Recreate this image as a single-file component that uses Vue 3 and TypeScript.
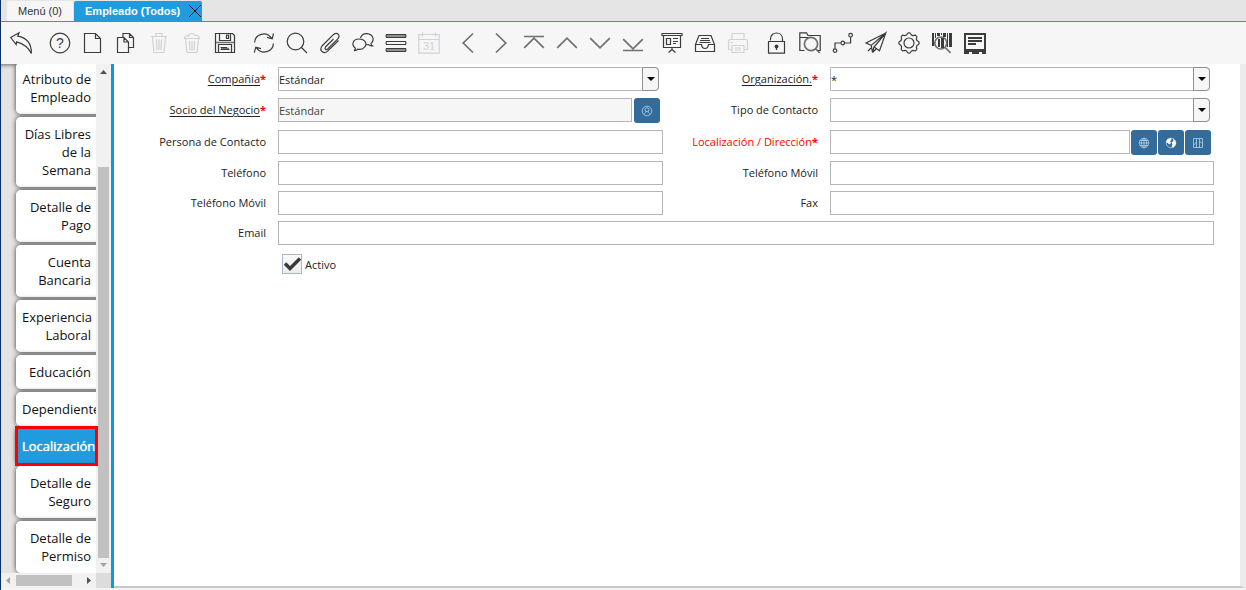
<script setup lang="ts">
import { ref } from 'vue'

interface Icon {
  name: string
  d?: string
  fill?: string
  soft?: string
  text?: string
  textY?: number
  size?: number
  disabled?: boolean
}

const ring = (x: number, y: number, r: number): string =>
  `M${x - r} ${y}a${r} ${r} 0 1 0 ${2 * r} 0a${r} ${r} 0 1 0 ${-2 * r} 0`

const gear = (): string => {
  const steps = 64
  const points: string[] = []
  for (let i = 0; i < steps; i++) {
    const a = (i / steps) * Math.PI * 2
    const r = 9.2 + 0.9 * Math.tanh(2.5 * Math.cos(8 * a))
    points.push(`${(11 + r * Math.cos(a)).toFixed(2)} ${(11 + r * Math.sin(a)).toFixed(2)}`)
  }
  return `M${points.join('L')}Z`
}

const groups: Icon[][] = [
  [{ name: 'Deshacer', d: 'M.7 5.5L9 .8L7.8 4.2C15.5 5.5 21.5 10.5 21.4 21.5C18 14.5 13.5 11.6 6.6 9.8L6.2 12.6Z' }],
  [
    { name: 'Ayuda', d: ring(11, 11, 9.8), text: '?', textY: 16, size: 14 },
    { name: 'Nuevo', d: 'M2.5 1.5H13.5L18.5 6.5V20.5H2.5ZM13.5 1.5V6.5H18.5' },
    { name: 'Copiar', d: 'M2.5 5.5H9L13.5 10V20.5H2.5ZM9 5.5V10H13.5M8 5V1.5H14.5L18.5 5.5V15.5H14M14.5 1.5V5.5H18.5' },
    { name: 'Borrar', disabled: true, d: 'M3 4.5H19M8 4V1.5H14V4M4.5 5L6 20.5H16L17.5 5M8.5 7.5L9 18M11 7.5V18M13.5 7.5L13 18' },
    { name: 'Borrar selección', disabled: true, d: 'M3.5 6.5C4 3 6.5 3.5 7.5 4C8 1 13 .5 14 3.5C16 2.5 18 4 18.5 6.5ZM4.5 7L6 20.5H16L17.5 7M8.5 9L9 18.5M11 9V18.5M13.5 9L13 18.5' },
    { name: 'Guardar', d: 'M1.5 1.5H18.5L20.5 3.5V20.5H1.5ZM5.5 1.5V8.5H16.5V1.5M12.5 3V6.5H14.5V3ZM4.5 20V12.5H17.5V20M6.5 15.5H13M6.5 17.5H15.5', soft: 'M2 10.5H20M7 16.5H15' },
  ],
  [
    { name: 'Refrescar', d: 'M1.6 10.5C2 2.2 13-1.6 18.8 6.4M20.5 1.5L19.2 6.8L14 5.4M20.4 11.5C20 19.8 9 23.6 3.2 15.6M1.3 20.6L2.8 15.2L8 16.6' },
    { name: 'Buscar', d: ring(9.5, 9.5, 8.3) + 'M15.5 15.5L21 21' },
    { name: 'Adjuntos', d: 'M14.5 7L6.500 15C5 17 7 18.500 8.700 17L18.800 6.900C21.800 3 18.200 -.3 14.600 2.400L3 14C-.3 18.400 4.600 22.400 8.400 19.400L19.500 8.500' },
    { name: 'Chat', d: 'M2 18.6C3.2 18 3.5 17.2 3.4 16.2C-1 12.8.8 7 6.8 7C13.2 7 15.7 12 12.4 15.4C10 17.6 7.4 17.6 5.8 17.2C4.6 18.5 3.2 18.8 2 18.6M8.4 6C9.6 2.6 12.2 1.4 15 1.6C21 2 23 8 19 11.4C19 12.6 19.6 13.4 20.4 13.8C18.6 14.2 17.4 13.6 16.4 12.6C15.4 12.8 14.8 12.8 14.2 12.6' },
    { name: 'Registros', d: 'M1.5 2.5H20.5Q21.5 4 20.5 5.5H1.5Q.5 4 1.5 2.5ZM1.5 9.5H20.5Q21.5 11 20.5 12.5H1.5Q.5 11 1.5 9.5ZM1.5 16.5H20.5Q21.5 18 20.5 19.5H1.5Q.5 18 1.5 16.5Z', soft: 'M1.5 4H20.5M1.5 18H20.5' },
    { name: 'Calendario', disabled: true, d: 'M.8 2.5H21.2V21.2H.8ZM.8 7.5H21.2M4.5 .5V4.5M17.5 .5V4.5', text: '31', textY: 18, size: 11 },
  ],
  [
    { name: 'Anterior', soft: 'M16 1.5L6.2 11L16 20.5' },
    { name: 'Siguiente', soft: 'M6 1.5L15.8 11L6 20.5' },
    { name: 'Primer registro', soft: 'M1 4.5H21M1.2 15.8L11 6.2L20.8 15.8' },
    { name: 'Registro anterior', soft: 'M1.2 15.8L11 6.2L20.8 15.8' },
    { name: 'Registro siguiente', soft: 'M1.2 6.2L11 15.8L20.8 6.2' },
    { name: 'Último registro', soft: 'M1.2 7.2L11 16.8L20.8 7.2M1 18.5H21' },
  ],
  [
    { name: 'Informe', d: 'M1 1.5H21V3.5H1ZM2.5 4V15.5H19.5V4M5.5 6.5H9.5V12.5H5.5ZM12 6.5H17M12 9.5H17M12 11.5H15M11 16V18M11 17.5L7.5 20.5M11 17.5L14.5 20.5' },
    { name: 'Archivo', d: 'M1.5 12.5L5 3.5H17L20.5 12.5V19.5H1.5ZM1.5 12.5H7.5Q8 16.5 11 16.5Q14 16.5 14.5 12.5H20.5M7 6.5H15M6 8.5H16M5.5 10.5H16.5' },
    { name: 'Imprimir', disabled: true, d: 'M5 7V1.5H17V7M4 17.5H1.5V9Q1.5 7.5 3 7.5H19Q20.5 7.5 20.5 9V17.5H18M5 13.5H17V20.5H5ZM3.5 10.5H6M8 16H14M8 18H14' },
  ],
  [
    { name: 'Bloquear', d: 'M2.500 9.5H18.5V21.2H2.500ZM4.5 8.5V7C4.5-1 16.500-1 16.500 7V9.5M10.5 15V18', fill: ring(10.5, 14.5, 1.9) },
    { name: 'Acercar', d: 'M5.5 18.5H.8V.8H7.5L9 3.5H21.2V18.5H19M.8 5.5H9', soft: ring(12, 12, 6.6) + 'M16.8 16.8L20.8 21' },
    { name: 'Flujo de trabajo', d: ring(3, 18.6, 1.8) + ring(10.8, 11, 1.8) + ring(18.6, 3.2, 1.8) + 'M3 16.5V11H8.8M12.8 11H18.6V5.2' },
    { name: 'Solicitudes', d: 'M20.8 1L1 11L6.2 13.4L20.8 1L14.5 18.8L9 15L20.8 1M6.2 13.4L7.5 20.5L9 15M11 17L7.5 20.5M3 19L6 16' },
    { name: 'Proceso', d: gear() + ring(11, 11, 5) },
    { name: 'Buscar producto', fill: 'M1 1H3V14H1ZM4 1H5V6H4ZM6 1H9V4H6ZM10 1H11V3H10ZM12 1H15V5H12ZM16 1H17V15H16ZM18 1H21V15H18ZM7 7H9V15H7ZM10 6H13V16H10Z', soft: ring(9.8, 11, 6) + 'M14.2 15.5L19.5 20.8' },
    { name: 'Formulario', fill: 'M0 1H22V22H18V20H15V22H8V20H5V22H0ZM2 3V17H20V3Z M4 5H18V7H4ZM4 8H18V10H4ZM4 11H12V13H4Z', d: '' },
  ],
]

const sideTabs = [
  'Atributo de Empleado', 'Días Libres de la Semana', 'Detalle de Pago', 'Cuenta Bancaria',
  'Experiencia Laboral', 'Educación', 'Dependientes', 'Localización', 'Detalle de Seguro', 'Detalle de Permiso',
]
const current = 'Localización'

const company = ref('Estándar')
const organization = ref('*')
const contactType = ref('')
const partner = ref('Estándar')
const active = ref(true)
</script>

<template>
  <div class="window">
    <nav class="window-tabs">
      <button type="button" class="wtab">Menú (0)</button>
      <button type="button" class="wtab selected">
        Empleado (Todos)
        <svg class="close" viewBox="0 0 14 14"><path d="M1 1L13 13M13 1L1 13" /></svg>
      </button>
    </nav>

    <div class="toolbar" role="toolbar">
      <div v-for="(group, g) in groups" :key="g" class="group">
        <button v-for="icon in group" :key="icon.name" type="button" class="tool" :disabled="icon.disabled" :aria-label="icon.name">
          <svg viewBox="0 0 22 22">
            <path v-if="icon.soft" class="soft" :d="icon.soft" />
            <path v-if="icon.d" class="line" :d="icon.d" />
            <path v-if="icon.fill" class="solid" fill-rule="evenodd" :d="icon.fill" />
            <text v-if="icon.text" x="11" :y="icon.textY" :font-size="icon.size">{{ icon.text }}</text>
          </svg>
        </button>
      </div>
    </div>

    <div class="body">
      <aside class="side">
        <div class="side-view">
          <nav class="side-tabs">
            <div v-for="tab in sideTabs" :key="tab" class="slot" :class="{ marked: tab === current }">
              <button type="button" class="stab" :class="{ current: tab === current }">{{ tab }}</button>
            </div>
          </nav>
          <div class="vbar">
            <svg class="arrow" viewBox="0 0 15 15"><path d="M4 10L7.500 6L11 10Z" fill="#505050" /></svg>
            <div class="vthumb"></div>
            <svg class="arrow" viewBox="0 0 15 15"><path d="M4 5L7.500 9L11 5Z" fill="#a3a3a3" /></svg>
          </div>
        </div>
        <div class="hrow">
          <div class="hbar">
            <svg class="arrow" viewBox="0 0 15 15"><path d="M9 4L5 7.500L9 11Z" fill="#a3a3a3" /></svg>
            <div class="hthumb"></div>
            <svg class="arrow" viewBox="0 0 15 15"><path d="M6 4L10 7.500L6 11Z" fill="#505050" /></svg>
          </div>
          <div class="corner"></div>
        </div>
      </aside>

      <main class="content">
        <form class="form" @submit.prevent>
          <label for="company"><span class="link">Compañía</span><b>*</b></label>
          <div class="combo">
            <select id="company" v-model="company"><option>Estándar</option></select>
            <span class="drop"></span>
          </div>
          <label for="org"><span class="link">Organización.</span><b>*</b></label>
          <div class="combo">
            <select id="org" v-model="organization"><option>*</option></select>
            <span class="drop"></span>
          </div>

          <label for="partner"><span class="link">Socio del Negocio</span><b>*</b></label>
          <div class="lookup">
            <input id="partner" v-model="partner" type="text" disabled />
            <button type="button" aria-label="Socio del Negocio">
              <svg viewBox="0 0 12 12"><path :d="ring(6, 6, 4.8)" /><path :d="ring(6, 4.8, 2)" /><path d="M3 9.500C3.500 7.500 5 7.500 5 6.500M9 9.500C8.500 7.500 7 7.500 7 6.500" /></svg>
            </button>
          </div>
          <label for="ctype">Tipo de Contacto</label>
          <div class="combo">
            <select id="ctype" v-model="contactType"><option value=""></option></select>
            <span class="drop"></span>
          </div>

          <label for="person">Persona de Contacto</label>
          <input id="person" type="text" />
          <label for="location" class="missing">Localización / Dirección<b>*</b></label>
          <div class="lookup wide">
            <input id="location" type="text" />
            <button type="button" aria-label="Dirección">
              <svg viewBox="0 0 12 12"><path :d="ring(6, 6, 4.8)" /><path d="M6 1V11M1 6H11M2 3.500H10M2 8.500H10M6 1C2.500 4 2.500 8 6 11C9.500 8 9.500 4 6 1" /></svg>
            </button>
            <button type="button" aria-label="Mapa">
              <svg viewBox="0 0 12 12"><path :d="ring(6, 6, 4.8)" /><path class="land" d="M1 5L2.500 2L6 1L6.500 3L5 4L6 6L4.500 7.500L2.500 6ZM8 1.500L10.500 4L11 7L8.500 10.500L6.500 9.500L7.500 7.500L6.500 5.500L8.500 4Z" /></svg>
            </button>
            <button type="button" aria-label="Ruta">
              <svg viewBox="0 0 12 12"><path d="M1.500 1.500L4.500 1.500L7.500 1.500L10.500 1.500V10.500H1.500ZM4.500 1.500V10.500M7.500 1.500V10.500M2 8L4.500 5M7.500 4L10 6.500" /></svg>
            </button>
          </div>

          <label for="phone">Teléfono</label>
          <input id="phone" type="text" />
          <label for="mobile2">Teléfono Móvil</label>
          <input id="mobile2" type="text" />

          <label for="mobile">Teléfono Móvil</label>
          <input id="mobile" type="text" />
          <label for="fax">Fax</label>
          <input id="fax" type="text" />

          <label for="email">Email</label>
          <input id="email" type="text" class="full" />

          <div class="check">
            <span class="box">
              <input id="active" v-model="active" type="checkbox" />
              <svg v-if="active" viewBox="0 0 20 20"><path d="M3 9.500L8 14.500L18 4.500" /></svg>
            </span>
            <label for="active">Activo</label>
          </div>
        </form>
      </main>
    </div>
  </div>
</template>

<style>
html,
body,
#app {
  height: 100%;
}
</style>

<style scoped>
* {
  box-sizing: border-box;
}
button {
  margin: 0;
  padding: 0;
  border: 0;
  background: none;
}
.window {
  display: flex;
  flex-direction: column;
  min-height: 100%;
  padding-bottom: 2px;
  border-left: 1px solid #0a3361;
  background: #f4f4f4;
  font-family: "Open Sans", "Noto Sans", sans-serif;
  font-size: 11px;
  color: #222;
}
.window-tabs {
  display: flex;
  gap: 1px;
  height: 22px;
  padding: 1px 0 0 6px;
  border-bottom: 1px solid #1f9bde;
  background: #e5e5e5;
}
.wtab {
  padding: 0 11px;
  background: #f6f6f6;
  color: #333;
  font: 11px/20px "Liberation Sans", Arial, sans-serif;
}
.wtab.selected {
  display: flex;
  align-items: center;
  gap: 8px;
  padding-right: 0;
  border-radius: 2px 2px 0 0;
  background: #1f9bde;
  color: #fff;
  font-weight: bold;
}
.close {
  width: 14px;
  height: 14px;
  fill: none;
  stroke: #111;
}
.toolbar {
  display: flex;
  gap: 6px;
  height: 42px;
  padding-left: 3px;
  background: #f6f6f6;
}
.group {
  display: flex;
}
.tool {
  width: 33px;
  padding: 0 5px 0 6px;
  color: #3c3c3c;
}
.tool:disabled {
  color: #d2d2d2;
}
.tool svg {
  display: block;
  width: 22px;
  height: 22px;
  overflow: visible;
}
.line,
.soft {
  fill: none;
  stroke: currentColor;
  stroke-width: 1.2;
}
.soft {
  stroke: #707070;
  stroke-width: 1.7;
}
.solid,
.tool text {
  fill: currentColor;
}
.tool text {
  font-family: "Liberation Sans", Arial, sans-serif;
  text-anchor: middle;
}
.body {
  display: flex;
  flex: 1;
}
.side {
  position: relative;
  display: flex;
  flex-direction: column;
  width: 113px;
  border-right: 3px solid #0a9ade;
}
.side-view {
  display: flex;
  flex: 1;
}
.side-tabs {
  flex: 1;
  height: 509px;
  padding-left: 15px;
  overflow: hidden;
  background: #e4e4e4;
  box-shadow: inset 0 4px 4px -3px #666;
}
.slot {
  width: 120px;
  margin-bottom: 3px;
}
.slot:first-child {
  margin-top: -2px;
}
.stab {
  display: block;
  width: 100%;
  padding: 8px 45px 8px 6px;
  border-radius: 5px 0 0 5px;
  background: linear-gradient(90deg, #fff 60%, #f8f8f8);
  box-shadow: 0 0 5px #333;
  color: #111;
  font: 13px/18px "Open Sans", "Noto Sans", sans-serif;
  text-align: right;
}
.stab.current {
  border-radius: 0;
  background: #1f9bde;
  color: #fff;
  text-shadow: 0 0 1px #fff;
}
.marked::after {
  content: "";
  position: absolute;
  z-index: 1;
  box-sizing: border-box;
  width: 83px;
  height: 40px;
  margin: -37px 0 0 -1px;
  border: 3px solid #f00;
}
.vbar {
  display: flex;
  flex-direction: column;
  width: 15px;
  background: #f1f1f1;
}
.arrow {
  display: block;
  flex: none;
  width: 15px;
  height: 15px;
}
.vthumb {
  flex: 1;
  margin: 88px 2px 0;
  background: #c1c1c1;
}
.hrow {
  display: flex;
  height: 15px;
}
.hbar {
  display: flex;
  flex: 1;
  background: #f1f1f1;
}
.hthumb {
  flex: 1;
  margin: 2px 9px 2px 0;
  background: #c1c1c1;
}
.corner {
  width: 15px;
  background: #dcdcdc;
}
.content {
  flex: 1;
  border-right: 6px solid #ececec;
  border-bottom: 2px solid #c8c8c8;
  background: #fff;
}
.form {
  display: grid;
  grid-template-columns: 164fr 385fr 167fr 384fr;
  grid-template-rows: 31px 32px 31px 30px 30px 30px auto;
  align-items: start;
  padding: 3px 26px 0 0;
}
.form > label {
  padding-right: 12px;
  line-height: 24px;
  text-align: right;
  white-space: nowrap;
}
.form b {
  color: #f00;
}
.link {
  text-decoration: underline;
  text-underline-offset: 2px;
}
.form > .missing {
  color: #f00;
}
input[type="text"],
select {
  width: 100%;
  min-width: 0;
  height: 24px;
  margin: 0;
  padding: 1px 0 0;
  border: 1px solid #b5b5b5;
  border-radius: 0;
  background: #fff;
  color: #222;
  font: 11px/20px "Open Sans", "Noto Sans", sans-serif;
}
input:disabled {
  background: #f6f6f6;
  color: #444;
}
.full {
  grid-column: 2 / -1;
}
.combo {
  display: grid;
  padding-right: 4px;
}
select {
  grid-area: 1 / 1;
  appearance: none;
  border-radius: 0 4px 4px 0;
}
.drop {
  grid-area: 1 / 1;
  display: grid;
  place-items: center;
  justify-self: end;
  width: 17px;
  height: 24px;
  border: 1px solid #8f8f8f;
  border-radius: 0 4px 4px 0;
  background: #f6f6f6;
  pointer-events: none;
}
.drop::after {
  content: "";
  border: solid transparent;
  border-width: 4px 4px 0;
  border-top-color: #000;
}
.lookup {
  display: flex;
  gap: 1px;
  padding-right: 3px;
}
.lookup input {
  margin-right: 1px;
  flex: 1;
}
.wide input {
  margin-right: 0;
}
.lookup button {
  display: grid;
  place-items: center;
  width: 26px;
  height: 25px;
  border-radius: 3px;
  background: #336b9b;
}
.lookup svg {
  width: 12px;
  height: 12px;
  fill: none;
  stroke: #b5d2e8;
  stroke-width: 0.8;
}
.lookup .land {
  fill: #fff;
  stroke: none;
}
.check {
  grid-column: 2;
  display: flex;
  align-items: center;
  gap: 3px;
  padding: 3px 4px;
}
.box {
  display: grid;
  width: 20px;
  height: 20px;
}
.box input {
  grid-area: 1 / 1;
  appearance: none;
  width: 20px;
  height: 20px;
  margin: 0;
  border: 1px solid #aab8c4;
  background: linear-gradient(#fafafa, #ececec);
}
.box svg {
  grid-area: 1 / 1;
  fill: none;
  stroke: #3a3a3a;
  stroke-width: 3.5;
  pointer-events: none;
}
</style>
